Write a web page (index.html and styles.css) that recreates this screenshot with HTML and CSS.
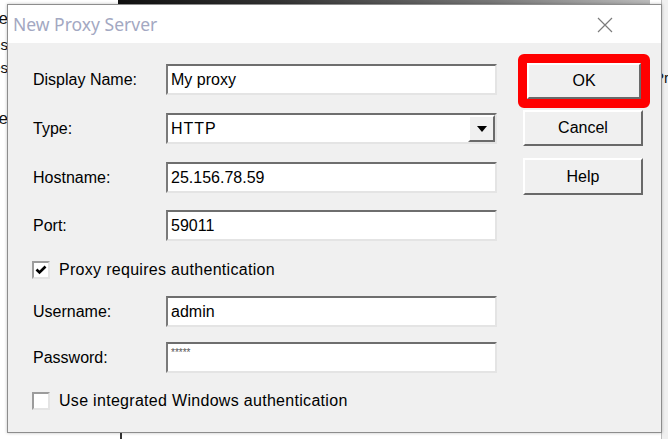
FILE: index.html
```html
<!DOCTYPE html>
<html lang="en">
<head>
    <meta charset="UTF-8" />
    <title>New Proxy Server</title>
    <link rel="stylesheet" href="styles.css">
</head>
<body>
    <div class="desk">
        <div class="topbar"></div>
        <div class="behind-left">
            <span class="frag f1">Name</span>
            <span class="frag f2">Options</span>
            <span class="frag f3">Files</span>
            <span class="frag f4">Type</span>
        </div>
        <div class="behind-right"><span class="frag f5">Print</span></div>
        <div class="behind-bottom"></div>
    </div>

    <div class="dialog">
        <div class="titlebar">
            <span class="title">New Proxy Server</span>
            <svg class="close" width="16" height="16" viewBox="0 0 16 16">
                <path d="M1 1 L15 15 M15 1 L1 15" stroke="#7c7c7c" stroke-width="1.2" fill="none"/>
            </svg>
        </div>
        <div class="content">
            <div class="form">
                <div class="row">
                    <label class="lbl">Display Name:</label>
                    <div class="field">My proxy</div>
                </div>
                <div class="row">
                    <label class="lbl">Type:</label>
                    <div class="field select">
                        <span class="wide">HTTP</span>
                        <span class="drop">
                            <svg width="10" height="6" viewBox="0 0 10 6"><path d="M0 0 H10 L5 6 Z" fill="#000"/></svg>
                        </span>
                    </div>
                </div>
                <div class="row r3">
                    <label class="lbl">Hostname:</label>
                    <div class="field">25.156.78.59</div>
                </div>
                <div class="row r4">
                    <label class="lbl">Port:</label>
                    <div class="field">59011</div>
                </div>
                <div class="check-row cr1">
                    <span class="box">
                        <svg width="12" height="10" viewBox="0 0 12 10"><path d="M1.5 4.5 L4.5 7.5 L10.5 1.5" stroke="#000" stroke-width="2.6" fill="none"/></svg>
                    </span>
                    <span class="check-text">Proxy requires authentication</span>
                </div>
                <div class="row r6">
                    <label class="lbl">Username:</label>
                    <div class="field">admin</div>
                </div>
                <div class="row r7">
                    <label class="lbl">Password:</label>
                    <div class="field pw">*****</div>
                </div>
                <div class="check-row">
                    <span class="box"></span>
                    <span class="check-text">Use integrated Windows authentication</span>
                </div>
            </div>
            <div class="buttons">
                <div class="highlight"><button class="btn ok">OK</button></div>
                <button class="btn">Cancel</button>
                <button class="btn help">Help</button>
            </div>
        </div>
    </div>
</body>
</html>
```

FILE: styles.css
```css
body { margin: 0; width: 668px; height: 439px; overflow: hidden; background: #fff; position: relative; font-family: "Liberation Sans", Arial, sans-serif; font-size: 16px; color: #000; }

/* window behind the dialog */
.desk { position: absolute; inset: 0; }
.topbar { position: absolute; left: 118px; top: 0; width: 532px; height: 5px; background: linear-gradient(to right, #111 0%, #333 30%, #777 70%, #bbb 100%); }
.behind-left { position: absolute; left: 0; top: 0; width: 8px; height: 439px; overflow: hidden; }
.frag { position: absolute; right: 0; font-size: 15px; color: #111; white-space: nowrap; }
.f1 { top: 9px; font-size: 17px; }
.f2 { top: 36px; }
.f3 { top: 59px; }
.f4 { top: 109px; font-size: 17px; }
.behind-right { position: absolute; right: 0; top: 0; width: 6px; height: 439px; background: #f0f0f0; border-left: 1px solid #bdbdbd; overflow: hidden; }
.f5 { left: -8px; right: auto; top: 69px; }
.behind-bottom { position: absolute; left: 120px; top: 430px; width: 2px; height: 9px; background: #333; }

/* dialog */
.dialog { position: absolute; left: 7px; top: 4px; width: 655px; height: 429px; box-sizing: border-box; border: 1px solid #8d8d8d; background: #f0f0f0; box-shadow: 0 0 3px rgba(0,0,0,0.25); display: flex; flex-direction: column; }
.titlebar { height: 38px; background: #fff; display: flex; align-items: center; justify-content: space-between; padding: 0 48px 0 5px; }
.title { font-family: "Noto Sans", sans-serif; font-size: 17.5px; color: #a3a8c2; }
.close { margin-top: 2px; }

.content { display: flex; padding: 21px 0 0 25px; }
.form { width: 464px; }
.row { display: flex; align-items: center; height: 31px; margin-bottom: 18px; }
.r3 { margin-bottom: 17px; }
.r4 { margin-bottom: 19px; }
.r6 { margin-bottom: 15px; }
.r7 { margin-bottom: 18px; }
.lbl { width: 133px; }
.field { width: 331px; height: 31px; box-sizing: border-box; background: #fff; border: 2px solid; border-color: #6e6e6e #e4e4e4 #e4e4e4 #7a7a7a; padding: 0 4px 0 3px; display: flex; align-items: center; }
.select { justify-content: space-between; padding-right: 0; }
.wide { letter-spacing: 1px; }
.drop { width: 27px; height: 27px; box-sizing: border-box; background: #f0f0f0; border: 2px solid; border-color: #fff #6a6a6a #6a6a6a #fff; display: flex; align-items: center; justify-content: center; }
.pw { align-items: flex-start; font-size: 10px; padding-top: 3px; color: #555; }

.check-row { display: flex; align-items: center; height: 20px; margin-bottom: 16px; gap: 9px; margin-left: -1px; }
.check-text { letter-spacing: 0.3px; }
.box { width: 18px; height: 18px; box-sizing: border-box; background: #fff; border: 2px solid; border-color: #9c9c9c #e4e4e4 #e4e4e4 #9c9c9c; display: flex; align-items: center; justify-content: center; }

.buttons { display: flex; flex-direction: column; align-items: flex-start; margin-left: 21px; margin-top: -10px; }
.highlight { border: 9px solid #ff0000; border-radius: 6px; margin-bottom: 2px; }
.btn { font-family: "Liberation Sans", Arial, sans-serif; font-size: 16px; width: 120px; height: 36px; margin-left: 5px; background: #f0f0f0; border: 2px solid; border-color: #fff #696969 #696969 #fff; padding: 0; color: #000; }
.ok { width: 114px; margin-left: 0; }
.help { margin-top: 12px; height: 37px; }
```
